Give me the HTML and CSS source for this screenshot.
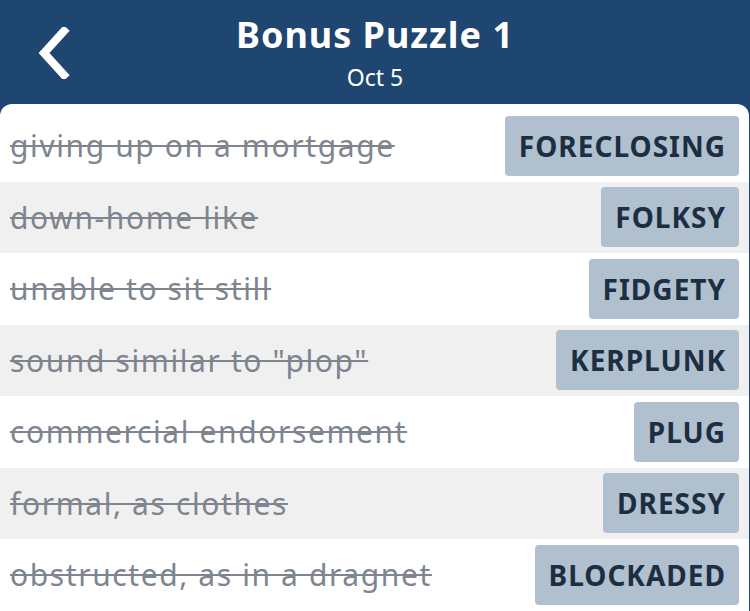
FILE: index.html
```html
<!DOCTYPE html>
<html>
<head>
<meta charset="utf-8">
<link rel="stylesheet" href="styles.css">
</head>
<body>
<div class="app">
  <header class="header">
    <div class="back">
      <svg width="34" height="52" viewBox="0 0 34 52"><path d="M28 4 L8 26 L28 48" fill="none" stroke="#fff" stroke-width="8" stroke-linecap="square" stroke-linejoin="miter"/></svg>
    </div>
    <div class="titles">
      <div class="title">Bonus Puzzle 1</div>
      <div class="subtitle">Oct 5</div>
    </div>
  </header>
  <main class="card">
    <div class="row"><span class="clue">giving up on a mortgage</span><span class="answer">FORECLOSING</span></div>
    <div class="row alt"><span class="clue">down-home like</span><span class="answer">FOLKSY</span></div>
    <div class="row"><span class="clue">unable to sit still</span><span class="answer">FIDGETY</span></div>
    <div class="row alt"><span class="clue">sound similar to "plop"</span><span class="answer">KERPLUNK</span></div>
    <div class="row"><span class="clue">commercial endorsement</span><span class="answer">PLUG</span></div>
    <div class="row alt"><span class="clue">formal, as clothes</span><span class="answer">DRESSY</span></div>
    <div class="row"><span class="clue">obstructed, as in a dragnet</span><span class="answer">BLOCKADED</span></div>
  </main>
</div>
</body>
</html>
```
FILE: styles.css
```css
* { box-sizing: border-box; }
html, body { margin: 0; padding: 0; }
body {
  width: 750px;
  height: 611px;
  overflow: hidden;
  background: #1f4571;
  font-family: "Noto Sans", "Open Sans", sans-serif;
}
.app { display: flex; flex-direction: column; height: 611px; }
.header {
  height: 104px;
  flex: none;
  position: relative;
  display: flex;
  justify-content: center;
  align-items: flex-start;
  color: #fff;
}
.back {
  position: absolute;
  left: 36px;
  top: 27px;
  line-height: 0;
}
.titles { text-align: center; padding-top: 12px; }
.title { font-size: 36px; font-weight: 700; line-height: 46px; letter-spacing: 1px; }
.subtitle { font-size: 23px; line-height: 28px; margin-top: 5px; }
.card {
  flex: 1;
  background: #fff;
  border-radius: 12px 12px 0 0;
  padding-top: 6px;
  width: 749px;
}
.row {
  height: 71.5px;
  display: flex;
  align-items: center;
  justify-content: space-between;
  padding: 0 10px 0 10px;
}
.row.alt { background: #f0f0f0; }
.clue {
  font-size: 30px;
  letter-spacing: 1.6px;
  color: #7e858f;
  text-decoration: line-through;
  text-decoration-thickness: 2px;
}
.answer {
  background: #b0c0ce;
  color: #1c2e42;
  font-weight: 700;
  font-size: 28px;
  letter-spacing: 1px;
  height: 60px;
  line-height: 60px;
  padding: 0 13px 0 14px;
  border-radius: 4px;
}
```
